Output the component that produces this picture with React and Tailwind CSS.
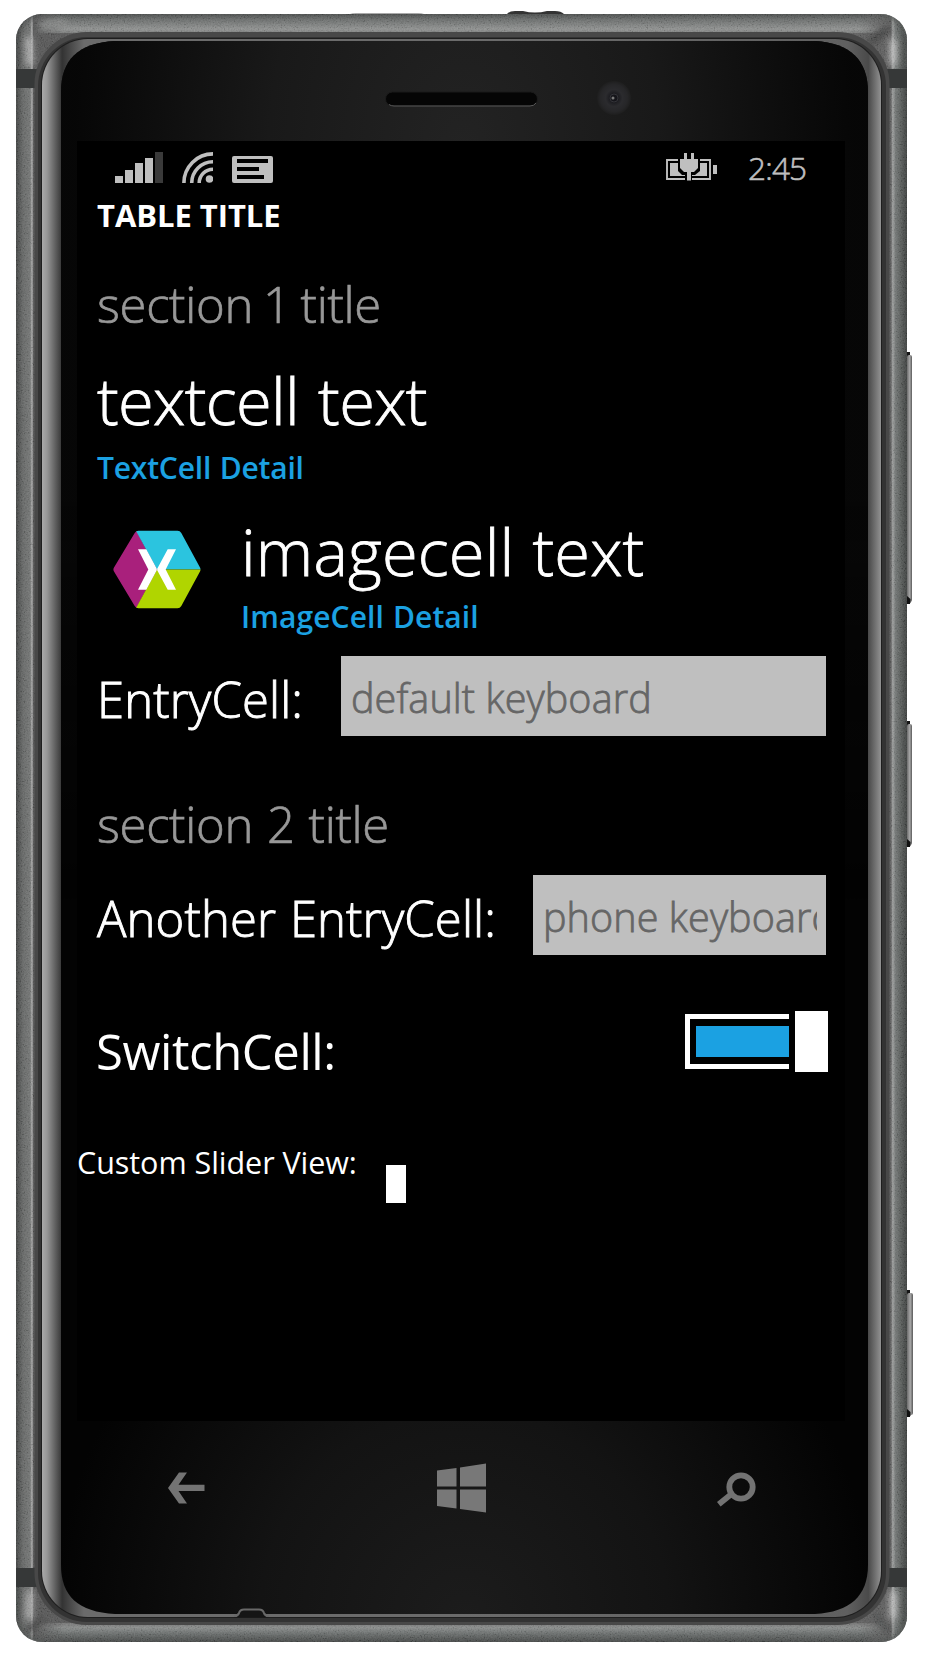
import React from "react";

function PhoneShell() {
  return (
    <svg className="absolute inset-0" width="929" height="1655" viewBox="0 0 929 1655" aria-hidden="true">
      <defs>
        <linearGradient id="side" gradientUnits="userSpaceOnUse" x1="16" y1="0" x2="907" y2="0">
          <stop offset="0" stopColor="#3f4140" />
          <stop offset="0.008" stopColor="#666867" />
          <stop offset="0.016" stopColor="#747675" />
          <stop offset="0.018" stopColor="#b4b4b4" />
          <stop offset="0.0195" stopColor="#555" />
          <stop offset="0.5" stopColor="#666" />
          <stop offset="0.982" stopColor="#5c5c5c" />
          <stop offset="0.984" stopColor="#a3a5a4" />
          <stop offset="0.987" stopColor="#737776" />
          <stop offset="0.993" stopColor="#585c5a" />
          <stop offset="1" stopColor="#393c3b" />
        </linearGradient>
        <linearGradient id="topRim" x1="0" y1="0" x2="0" y2="1">
          <stop offset="0" stopColor="#484b4a" />
          <stop offset="0.3" stopColor="#6b6e6d" />
          <stop offset="0.8" stopColor="#929493" />
          <stop offset="1" stopColor="#7d7f7e" />
        </linearGradient>
        <linearGradient id="bottomRim" x1="0" y1="0" x2="0" y2="1">
          <stop offset="0" stopColor="#757575" />
          <stop offset="0.25" stopColor="#8b8e8d" />
          <stop offset="0.6" stopColor="#666a69" />
          <stop offset="1" stopColor="#434645" />
        </linearGradient>
        <linearGradient id="fade" gradientUnits="userSpaceOnUse" x1="34" y1="0" x2="889" y2="0">
          <stop offset="0" stopColor="#000" />
          <stop offset="0.035" stopColor="#fff" />
          <stop offset="0.965" stopColor="#fff" />
          <stop offset="1" stopColor="#000" />
        </linearGradient>
        <mask id="rimMask" maskUnits="userSpaceOnUse" x="0" y="0" width="929" height="1655">
          <rect width="929" height="1655" fill="url(#fade)" />
        </mask>
        <linearGradient id="bezel" gradientUnits="userSpaceOnUse" x1="42" y1="0" x2="881" y2="0">
          <stop offset="0" stopColor="#a9a9a9" />
          <stop offset="0.006" stopColor="#969696" />
          <stop offset="0.024" stopColor="#333" />
          <stop offset="0.05" stopColor="#6b6b6b" />
          <stop offset="0.5" stopColor="#6b6b6b" />
          <stop offset="0.96" stopColor="#606060" />
          <stop offset="0.985" stopColor="#4a4a4a" />
          <stop offset="1" stopColor="#929292" />
        </linearGradient>
        <radialGradient id="glowTop" gradientUnits="userSpaceOnUse" cx="0" cy="0" r="1" gradientTransform="translate(464 150) scale(390 560)">
          <stop offset="0" stopColor="#232323" />
          <stop offset="0.5" stopColor="#191919" />
          <stop offset="0.95" stopColor="#080808" />
          <stop offset="1" stopColor="#080808" stopOpacity="0.8" />
        </radialGradient>
        <linearGradient id="topFade" gradientUnits="userSpaceOnUse" x1="0" y1="41" x2="0" y2="900">
          <stop offset="0.5" stopColor="#fff" />
          <stop offset="1" stopColor="#000" />
        </linearGradient>
        <mask id="glassMask" maskUnits="userSpaceOnUse" x="0" y="0" width="929" height="1655">
          <rect width="929" height="1655" fill="url(#topFade)" />
        </mask>
        <radialGradient id="glowBottom" gradientUnits="userSpaceOnUse" cx="0" cy="0" r="1" gradientTransform="translate(464 1620) scale(410 420)">
          <stop offset="0" stopColor="#1c1c1c" />
          <stop offset="0.5" stopColor="#131313" />
          <stop offset="1" stopColor="#030303" />
        </radialGradient>
        <radialGradient id="camera">
          <stop offset="0" stopColor="#555" />
          <stop offset="0.15" stopColor="#15151a" />
          <stop offset="0.5" stopColor="#2b2b2e" />
          <stop offset="0.8" stopColor="#262628" />
          <stop offset="1" stopColor="#1e1e1e" />
        </radialGradient>
        <linearGradient id="key" x1="0" y1="0" x2="1" y2="0">
          <stop offset="0" stopColor="#6c6c6c" />
          <stop offset="0.55" stopColor="#a8a8a8" />
          <stop offset="1" stopColor="#5a5a5a" />
        </linearGradient>
        <clipPath id="body"><rect x="16" y="14" width="891" height="1628" rx="26" /></clipPath>
        <filter id="soft" filterUnits="userSpaceOnUse" x="0" y="0" width="929" height="1655"><feGaussianBlur stdDeviation="3" /></filter>
        <filter id="grain" filterUnits="userSpaceOnUse" x="16" y="14" width="891" height="1628">
          <feTurbulence type="fractalNoise" baseFrequency="0.7" numOctaves="2" seed="4" />
          <feColorMatrix values="0.8 0.8 0 0 -0.5  0.8 0.8 0 0 -0.5  0.8 0.8 0 0 -0.5  0 0 0 0 0.14" />
        </filter>
      </defs>
      <path d="M507 14 q2 -3 8 -3 h8 q12 3 24 0 h8 q6 0 9 3z" fill="#333" />
      <path d="M350 14 q2 -1 6 -1 h62 q4 0 6 1z" fill="#aaa" />
      {[[352, 252], [721, 126], [1290, 127]].map(([y, h]) => (
        <g key={y}>
          <rect x="906" y={y} width="4" height={h} fill="#151515" />
          <rect x="907" y={y + 3} width={y === 1290 ? 6 : 5} height={h - 5} rx="2" fill="url(#key)" />
          <path d={`M907 ${y + h - 8} l3.5 3 v4 l-3.5 1z`} fill="#111" />
        </g>
      ))}
      <g clipPath="url(#body)">
        <rect x="16" y="14" width="891" height="1628" fill="url(#side)" />
        <g mask="url(#rimMask)">
          <path d="M16 14 H907 V33 H16 Z" fill="url(#topRim)" />
          <path d="M16 1642 H907 V1623 H16 Z" fill="url(#bottomRim)" />
        </g>
        <g filter="url(#soft)" fill="none" strokeLinecap="round">
          <path d="M42 12 Q16 14 14 40 V64" stroke="#444746" strokeWidth="8" />
          <path d="M881 12 Q907 14 909 40 V64" stroke="#4c4f4e" strokeWidth="8" />
          <path d="M42 1644 Q16 1642 14 1616 V1590" stroke="#4a4d4c" strokeWidth="8" />
          <path d="M881 1644 Q907 1642 909 1616 V1590" stroke="#4c4f4e" strokeWidth="8" />
          <path d="M29 40 L30 62" stroke="#c2c2c2" strokeWidth="6" />
          <path d="M44 25 L62 23" stroke="#8a8c8b" strokeWidth="8" />
          <path d="M871 42 L886 30" stroke="#3c3e3d" strokeWidth="7" />
          <path d="M893 42 L893 62" stroke="#cfcfcf" strokeWidth="6" />
          <path d="M29 1616 L30 1594" stroke="#b8b8b8" strokeWidth="6" />
          <path d="M28 1630 L40 1620" stroke="#3f4140" strokeWidth="6" />
          <path d="M893 1616 L893 1594" stroke="#cfcfcf" strokeWidth="6" />
          <path d="M876 1616 L888 1630" stroke="#4a4c4b" strokeWidth="6" />
        </g>
        <rect x="16" y="14" width="891" height="1628" filter="url(#grain)" />
        <rect x="16" y="69" width="891" height="19" fill="#363838" />
        <rect x="16" y="1568" width="891" height="19" fill="#363838" />
      </g>
      <rect x="34.5" y="32" width="855" height="1593" rx="52" fill="#484848" />
      <rect x="38" y="37" width="848" height="1585" rx="49" fill="#333" />
      <rect x="41" y="38" width="841" height="1580" rx="47" fill="#1e1e1e" />
      <rect x="42" y="39" width="839" height="1578" rx="46" fill="url(#bezel)" />
      <path d="M115 41 H815 C850 43 868 60 868 92 V1565 C868 1596 850 1612 815 1614 H115 C78 1612 61 1596 61 1565 V92 C61 60 78 43 115 41Z" fill="url(#glowBottom)" />
      <path mask="url(#glassMask)" d="M115 41 H815 C850 43 868 60 868 92 V900 H61 V92 C61 60 78 43 115 41Z" fill="url(#glowTop)" />
      <rect x="385.5" y="92" width="152" height="14" rx="7" fill="#050505" stroke="#1b1b1b" />
      <path d="M389 104.500 q2 1.500 5 1.500 h136 q4 0 6 -3" fill="none" stroke="#5b5b5b" />
      <circle cx="614" cy="98" r="17" fill="url(#camera)" />
      <circle cx="614" cy="98" r="4" fill="#15151a" stroke="#333338" />
      <circle cx="613" cy="98" r="1.500" fill="#7a7a7a" />
      <path d="M234 1617.500 q4 0 5 -4 q1 -4 5 -4 h15 q4 0 5 4 q1 4 5 4z" fill="#151515" />
      <path d="M234 1616 q4 0 5 -3 q1 -3.500 5 -3.500 h15 q4 0 5 3.500 q1 3 5 3" fill="none" stroke="#686868" strokeWidth="2.200" />
    </svg>
  );
}

function StatusBar() {
  return (
    <div className="flex h-[54px] items-start pt-[11px] pl-[38px] pr-[38px]">
      <svg width="48" height="31" viewBox="0 0 48 31" fill="#bfbfbf">
        <path d="M0 24h8v7H0zM10 18h8v13h-8zM20 11h8v20h-8zM30 6h8v25h-8z" />
        <path d="M40 0h8v31h-8z" fill="#3a3a3a" />
      </svg>
      <svg className="ml-[19px]" width="31" height="31" viewBox="0 0 31 31" fill="none" stroke="#bfbfbf" strokeWidth="3.600">
        <path d="M1.900 31A29.100 29.100 0 0 1 31 1.900M9.700 31A21.300 21.300 0 0 1 31 9.700M17.200 31A13.800 13.800 0 0 1 31 17.200" />
        <circle cx="27.500" cy="27" r="3.800" fill="#bfbfbf" stroke="none" />
      </svg>
      <svg className="ml-[19px] mt-[4px]" width="41" height="27" viewBox="0 0 41 27">
        <rect width="41" height="27" rx="2" fill="#bfbfbf" />
        <path d="M5 3h31v4H5zM5 11h22v4H5zM5 19h27v4H5z" fill="#000" />
      </svg>
      <svg className="ml-auto mt-px" width="52" height="28" viewBox="0 0 52 28">
        <path d="M1 7h43v19H1z" fill="none" stroke="#bfbfbf" strokeWidth="1.900" />
        <path d="M4 10h37v13H4zM47 12h4v9h-4z" fill="#bfbfbf" />
        <path d="M12 4h22v14l-5 4h-3v6h-7v-6h-3l-4-4z" fill="#000" />
        <path d="M18 0h3v6h4V0h3v6h4v9l-4 4h-3v8.500h-4v-8.500h-3L14 15V6h4z" fill="#bfbfbf" />
      </svg>
      <span className="ml-[30px] mt-[2px] w-[59px] whitespace-nowrap text-[31.500px] leading-[28px] font-light tracking-[-0.8px] text-[#bfbfbf] [-webkit-text-stroke:0.6px]">2:45</span>
    </div>
  );
}

function HexLogo() {
  return (
    <svg width="88" height="79" viewBox="113 530 88 79">
      <defs>
        <clipPath id="hex">
          <path d="M138.500 530.700H177.500Q180 530.700 181.300 533L200 567.500Q201 569.500 200 571.500L181.300 606Q180 608.300 177.500 608.300H138.500Q136 608.300 134.700 606L114 571.500Q112.800 569.500 114 567.500L134.700 533Q136 530.700 138.500 530.700Z" />
        </clipPath>
      </defs>
      <g clipPath="url(#hex)">
        <path d="M136 530L113 530V609H136L157 569.500Z" fill="#a9207c" />
        <path d="M135.500 530H201V569.500H157Z" fill="#2bc4df" />
        <path d="M135.500 609H201V569.500H157Z" fill="#b0d500" />
      </g>
      <g fill="#fff">
        <path d="M138 549.200H146.300L156.800 568.800V570.200L146.300 589.800H138L148.300 569.500Z" />
        <path d="M176 549.200H167.700L157.200 568.800V570.200L167.700 589.800H176L165.700 569.500Z" />
      </g>
    </svg>
  );
}

function SectionTitle({ className, children }) {
  return <h2 className={`h-[60px] text-[49px] leading-[60px] font-light tracking-[-0.3px] text-[#989898] [-webkit-text-stroke:0.7px] ${className}`}>{children}</h2>;
}

function CellText({ text, detail, className, textClass, detailClass }) {
  return (
    <div className={`flex flex-col ${className}`}>
      <div className={`h-[70px] text-[65px] leading-[70px] font-light [-webkit-text-stroke:0.8px] ${textClass}`}>{text}</div>
      <div className={`h-[40px] text-[30px] leading-[40px] font-semibold text-[#1ba1e2] ${detailClass}`}>{detail}</div>
    </div>
  );
}

function EntryCell({ label, placeholder, className, labelClass, boxClass }) {
  return (
    <div className={`flex h-[80px] justify-between pr-[19px] ${className}`}>
      <div className={`pt-[3px] text-[49px] leading-[81px] font-light [-webkit-text-stroke:0.9px] ${labelClass}`}>{label}</div>
      <div className={`h-[80px] bg-[#bfbfbf] pl-[10px] pr-[9px] ${boxClass}`}>
        <div className="h-[80px] overflow-hidden pt-[2px] text-[39.500px] leading-[80px] font-light tracking-[0.1px] text-[#666] [-webkit-text-stroke:0.8px]">{placeholder}</div>
      </div>
    </div>
  );
}

function NavBar() {
  return (
    <div className="flex h-[130px] items-center justify-between pl-[91px] pr-[96px] pt-[3px]">
      <svg width="37" height="32" viewBox="0 0 37 32" fill="#737373">
        <path d="M0 16L11 0.500H19L10.500 12.800H36.500V19H10.500L19 31.500H11Z" />
      </svg>
      <svg className="ml-px" width="50" height="50" viewBox="0 0 50 50" fill="#787878">
        <path d="M0 7.500L19.500 5V23.500H0zM23 4.500L49 0.500V23.500H23zM0 26.500H19.500V45.500L0 43zM23 26.500H49V49.500L23 46z" />
      </svg>
      <svg className="mt-[4px]" width="39" height="35" viewBox="0 0 39 35" fill="none" stroke="#737373" strokeWidth="5.800">
        <circle cx="24" cy="15" r="11.700" />
        <path d="M14.500 22L1.800 32.200" />
      </svg>
    </div>
  );
}

export default function App() {
  return (
    <div className="relative h-[1655px] w-[929px] overflow-hidden bg-white font-['Open_Sans','Noto_Sans',sans-serif]">
      <PhoneShell />
      <div className="relative px-[77px] pt-[141px]">
        <main className="h-[1280px] w-[768px] overflow-hidden whitespace-nowrap bg-black text-white">
          <StatusBar />
          <div className="pl-[20px]">
            <h1 className="h-[40px] text-[31px] leading-[41px] font-bold tracking-[-0.05px]">TABLE TITLE</h1>
            <SectionTitle className="mt-[39px] [word-spacing:-2.500px]">section 1 title</SectionTitle>
            <CellText
              className="mt-[31px] gap-[13px]"
              text="textcell text"
              detail="TextCell Detail"
              textClass="tracking-[-0.7px] [word-spacing:3px]"
              detailClass="tracking-[-0.2px] [word-spacing:1px]"
            />
            <div className="mt-[28px] flex">
              <div className="w-[144px] pl-[16px] pt-[14px]"><HexLogo /></div>
              <CellText
                className="gap-[11px]"
                text="imagecell text"
                detail="ImageCell Detail"
                textClass="tracking-[0.15px] [word-spacing:1px]"
                detailClass="tracking-[0.1px] [word-spacing:1px]"
              />
            </div>
            <EntryCell className="mt-[19px]" label="EntryCell:" placeholder="default keyboard" labelClass="tracking-[0.1px]" boxClass="w-[485px]" />
            <SectionTitle className="mt-[58px] [word-spacing:1.500px]">section 2 title</SectionTitle>
            <EntryCell className="mt-[21px]" label="Another EntryCell:" placeholder="phone keyboard" labelClass="tracking-[0.1px] [word-spacing:1px]" boxClass="w-[293px]" />
            <div className="mt-[56px] flex h-[61px] items-start justify-between pr-[17px]">
              <div className="-ml-px pt-[10px] text-[49px] leading-[61px] font-normal tracking-[-0.4px]">SwitchCell:</div>
              <div className="flex items-center gap-[6px]">
                <div className="h-[55px] w-[104px] border-y-[5px] border-l-[5px] border-white py-[7px] pl-[6px]">
                  <div className="h-[31px] bg-[#1ba1e2]" />
                </div>
                <div className="h-[61px] w-[33px] bg-white" />
              </div>
            </div>
          </div>
          <div className="mt-[70px] flex h-[61px]">
            <div className="w-[308.500px] text-[30.500px] leading-[41px] font-normal tracking-[-0.05px]">Custom Slider View:</div>
            <div className="h-[38px] w-[20px] self-end bg-white" />
          </div>
        </main>
        <NavBar />
      </div>
    </div>
  );
}
